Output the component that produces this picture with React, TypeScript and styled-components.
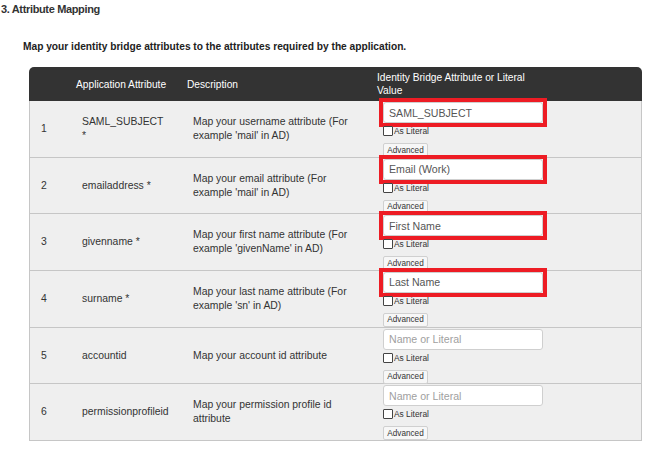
import React from "react";
import styled, { createGlobalStyle } from "styled-components";

const Global = createGlobalStyle`
  html, body { margin: 0; padding: 0; background: #fff; }
  body { font-family: "Liberation Sans", Arial, sans-serif; color: #333; }
`;

const Page = styled.div`
  width: 650px;
  height: 451px;
  overflow: hidden;
  display: flex;
  flex-direction: column;
`;

const SectionTitle = styled.h3`
  margin: 0;
  padding: 3px 0 0 1px;
  font-size: 11px;
  line-height: 13px;
  font-weight: bold;
  letter-spacing: -0.35px;
  color: #333;
`;

const Intro = styled.p`
  margin: 24px 0 0 23px;
  font-size: 10.2px;
  line-height: 13px;
  font-weight: bold;
  color: #222;
`;

const Table = styled.div`
  margin: 14px 0 0 29px;
  width: 613px;
  display: flex;
  flex-direction: column;
`;

const HeadRow = styled.div`
  display: grid;
  grid-template-columns: 41px 111px 190px 1fr;
  height: 34px;
  background: #333333;
  border-radius: 5px 5px 0 0;
  color: #fff;
  font-size: 10.2px;
  line-height: 13px;
`;

const HeadCell = styled.div<{ $max?: number }>`
  display: flex;
  align-items: center;
  padding-left: 6px;
  & > span {
    max-width: ${(p) => (p.$max ? `${p.$max}px` : "none")};
  }
`;

const BodyRow = styled.div`
  box-sizing: border-box;
  display: grid;
  grid-template-columns: 40px 111px 190px 1fr;
  height: 56.67px;
  background: #efefef;
  border-left: 1px solid #c6c6c6;
  border-right: 1px solid #c6c6c6;
  border-bottom: 1px solid #c6c6c6;
  font-size: 10.4px;
  line-height: 14px;
  color: #333;
`;

const Cell = styled.div<{ $pad?: number }>`
  display: flex;
  align-items: center;
  padding-left: ${(p) => p.$pad ?? 12}px;
  padding-right: 8px;
`;

const ValueCell = styled.div`
  display: flex;
  flex-direction: column;
  align-items: flex-start;
  padding: 1px 0 0 12px;
`;

const Flag = styled.span<{ $on?: boolean }>`
  display: block;
  outline: ${(p) => (p.$on ? "4px solid #ed1c24" : "none")};
  outline-offset: 0;
  border-radius: 0;
`;

const TextInput = styled.input`
  display: block;
  box-sizing: border-box;
  width: 160px;
  height: 21px;
  margin: 0;
  padding: 0 5px;
  border: 1px solid #cfcfcf;
  border-radius: 3px;
  background: #fff;
  font-family: "Liberation Sans", Arial, sans-serif;
  font-size: 10.6px;
  color: #555;
  outline: none;
  &::placeholder { color: #a0a0a0; }
`;

const LiteralLabel = styled.label`
  display: flex;
  align-items: flex-end;
  margin-top: 2px;
  height: 11px;
  font-size: 8.4px;
  line-height: 9px;
  color: #333;
`;

const Box = styled.span`
  box-sizing: border-box;
  width: 10px;
  height: 10px;
  border: 1px solid #444;
  border-radius: 1px;
  background: #fff;
  margin-right: 1px;
`;

const AdvancedButton = styled.button`
  box-sizing: border-box;
  margin-top: 7px;
  height: 14px;
  width: 45px;
  padding: 0;
  border: 1px solid #d0d0d0;
  border-radius: 2px;
  background: #f7f7f7;
  font-family: "Liberation Sans", Arial, sans-serif;
  font-size: 8.2px;
  color: #333;
`;

type Row = {
  n: number;
  attr: React.ReactNode;
  desc: string;
  value?: string;
  flag?: boolean;
};

const rows: Row[] = [
  { n: 1, attr: <>SAML_SUBJECT<br />*</>, desc: "Map your username attribute (For example 'mail' in AD)", value: "SAML_SUBJECT", flag: true },
  { n: 2, attr: "emailaddress *", desc: "Map your email attribute (For example 'mail' in AD)", value: "Email (Work)", flag: true },
  { n: 3, attr: "givenname *", desc: "Map your first name attribute (For example 'givenName' in AD)", value: "First Name", flag: true },
  { n: 4, attr: "surname *", desc: "Map your last name attribute (For example 'sn' in AD)", value: "Last Name", flag: true },
  { n: 5, attr: "accountid", desc: "Map your account id attribute" },
  { n: 6, attr: "permissionprofileid", desc: "Map your permission profile id attribute" },
];

export default function App() {
  return (
    <Page>
      <Global />
      <SectionTitle>3. Attribute Mapping</SectionTitle>
      <Intro>Map your identity bridge attributes to the attributes required by the application.</Intro>
      <Table>
        <HeadRow>
          <HeadCell />
          <HeadCell><span>Application Attribute</span></HeadCell>
          <HeadCell><span>Description</span></HeadCell>
          <HeadCell $max={165}><span>Identity Bridge Attribute or Literal Value</span></HeadCell>
        </HeadRow>
        {rows.map((r) => (
          <BodyRow key={r.n}>
            <Cell $pad={11}>{r.n}</Cell>
            <Cell>{r.attr}</Cell>
            <Cell>{r.desc}</Cell>
            <ValueCell>
              <Flag $on={r.flag}>
                <TextInput defaultValue={r.value} placeholder="Name or Literal" />
              </Flag>
              <LiteralLabel>
                <Box />
                As Literal
              </LiteralLabel>
              <AdvancedButton type="button">Advanced</AdvancedButton>
            </ValueCell>
          </BodyRow>
        ))}
      </Table>
    </Page>
  );
}
